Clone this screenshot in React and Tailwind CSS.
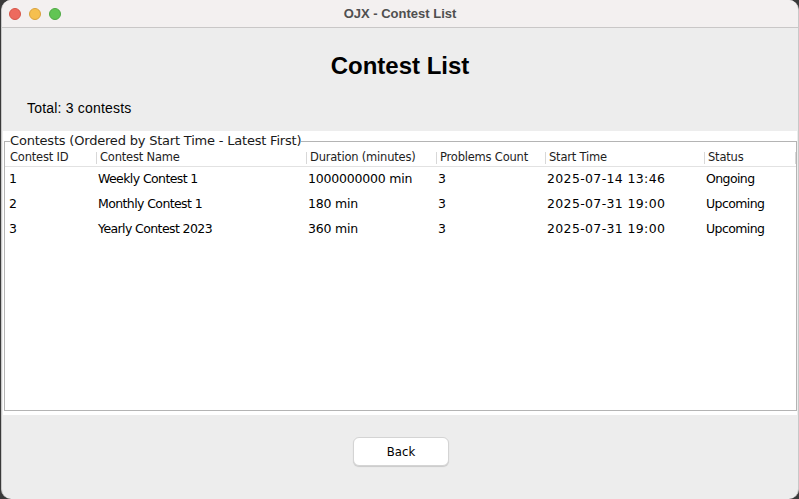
import React from 'react';

const columns = [
  { label: 'Contest ID', width: 'w-[91px]', cell: '' },
  { label: 'Contest Name', width: 'w-[210px]', cell: 'tracking-[-0.6px]' },
  { label: 'Duration (minutes)', width: 'w-[130px]', cell: '' },
  { label: 'Problems Count', width: 'w-[109px]', cell: '' },
  { label: 'Start Time', width: 'w-[159px]', cell: 'tracking-[0.35px]' },
  { label: 'Status', width: 'w-[91px]', cell: 'tracking-[-0.6px]' },
];

const contests = [
  ['1', 'Weekly Contest 1', '1000000000 min', '3', '2025-07-14 13:46', 'Ongoing'],
  ['2', 'Monthly Contest 1', '180 min', '3', '2025-07-31 19:00', 'Upcoming'],
  ['3', 'Yearly Contest 2023', '360 min', '3', '2025-07-31 19:00', 'Upcoming'],
];

const TrafficLights = () => (
  <div className="flex items-center gap-2 pl-[7px]">
    <div className="w-3 h-3 rounded-full bg-[#ed6a5e] border border-[#d65548]"></div>
    <div className="w-3 h-3 rounded-full bg-[#f5bf4f] border border-[#d9a23c]"></div>
    <div className="w-3 h-3 rounded-full bg-[#61c554] border border-[#4ea943]"></div>
  </div>
);

export default function App() {
  return (
    <div className="w-[799px] h-[499px] bg-[#3a3a3a] overflow-hidden">
      <div className="w-[798px] h-[499px] ml-[1px] bg-[#ededed] rounded-[10px] overflow-hidden flex flex-col border-l border-r border-[#c8c8c8]">
        {/* Title bar */}
        <div className="h-[28px] flex-shrink-0 bg-[#f3f0f0] border-b border-[#c9c7c7] flex items-center relative">
          <TrafficLights />
          <span className="absolute inset-x-0 text-center text-[13px] font-bold text-[#4f4f4f] font-['Liberation_Sans',sans-serif]">
            OJX - Contest List
          </span>
        </div>

        {/* Heading */}
        <div className="h-[103px] flex-shrink-0 flex flex-col font-['Liberation_Sans',sans-serif] text-black">
          <h1 className="mt-[22px] text-center text-[24px] font-bold leading-[32px]">Contest List</h1>
          <p className="mt-[16px] pl-[25px] text-[14px] tracking-[0.2px] leading-[20px]">Total: 3 contests</p>
        </div>

        {/* Table panel */}
        <div className="h-[284px] flex-shrink-0 mx-[1px] bg-white pt-[2px] pl-[1px] pr-[1px] pb-[4px] font-['DejaVu_Sans',sans-serif]">
          <fieldset className="h-full border border-[#b4b4b4] px-0 pb-0">
            <legend className="ml-[5px] px-0 text-[13px] leading-[16px] text-[#1a1a1a] tracking-[-0.2px]">
              Contests (Ordered by Start Time - Latest First)
            </legend>
            <div className="flex h-[17px] mt-[1px] border-b border-[#e2e2e2] text-[11.5px] text-[#1e1e1e] tracking-[-0.2px]">
              {columns.map((c, i) => (
                <div key={c.label} className={`${c.width} flex items-center`}>
                  {i > 0 && <div className="w-px h-[12px] bg-[#d8d8d8] mr-[3px]"></div>}
                  <span className={i === 0 ? 'pl-[5px]' : ''}>{c.label}</span>
                </div>
              ))}
              <div className="w-px h-[12px] bg-[#d8d8d8] self-center"></div>
            </div>
            {contests.map((row) => (
              <div key={row[0]} className="flex h-[25px] items-center text-[12.5px] text-black tracking-[-0.2px]">
                {row.map((cell, i) => (
                  <div key={i} className={`${columns[i].width} ${i === 0 ? 'pl-[4px]' : 'pl-[2px]'} ${columns[i].cell}`}>
                    {cell}
                  </div>
                ))}
              </div>
            ))}
          </fieldset>
        </div>

        {/* Footer */}
        <div className="flex-1 flex justify-center pt-[22px] pl-[2px]">
          <button className="w-[96px] h-[29px] bg-white rounded-[6px] border border-[#d4d4d4] shadow-[0_1px_1px_rgba(0,0,0,0.15)] text-[13px] text-black font-['DejaVu_Sans_Condensed','DejaVu_Sans',sans-serif]">
            Back
          </button>
        </div>
      </div>
    </div>
  );
}
